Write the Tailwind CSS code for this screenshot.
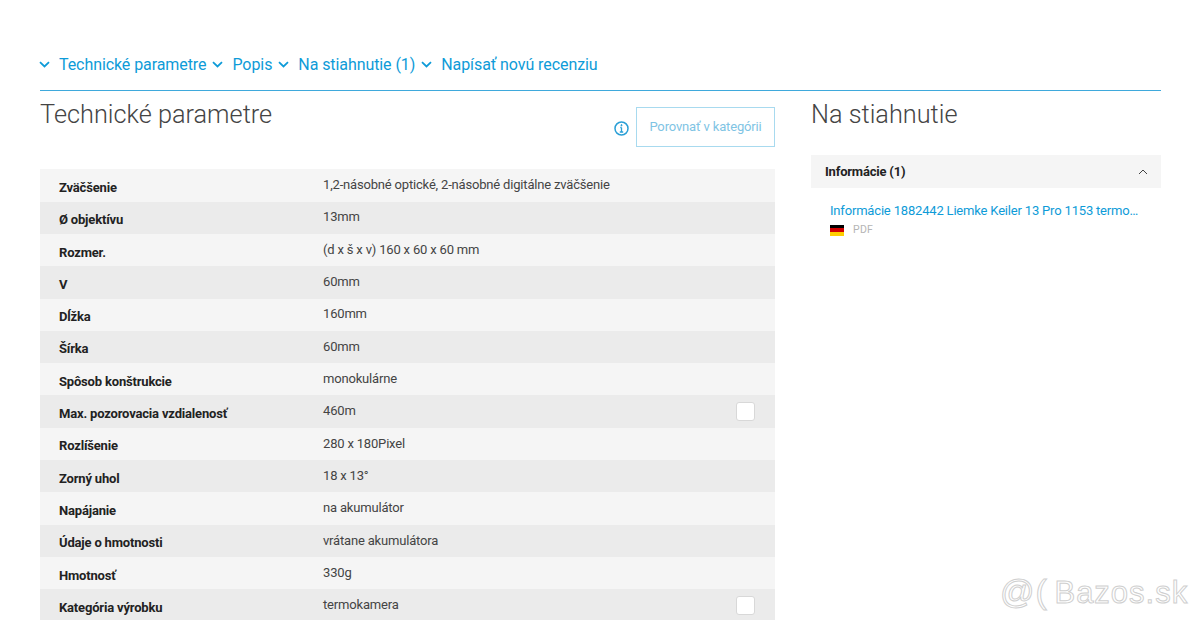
<!DOCTYPE html>
<html lang="sk">
<head>
<meta charset="utf-8">
<script src="https://cdn.jsdelivr.net/npm/@tailwindcss/browser@4"></script>
</head>
<body class="bg-white">
<div class="relative h-[620px] w-[1200px] overflow-hidden bg-white pl-10 pr-[39px] pt-[54px] font-['Roboto',sans-serif]">
  <nav class="flex h-[37px] items-start border-b border-[#3fa9dc] text-[16px] leading-[21px] tracking-[-0.08px] text-[#0e9bd8]">
    <svg class="mt-[7px] -ml-[1px] mr-[9px] h-[7px] w-[11px]" viewBox="0 0 11 7" fill="none" stroke="#0e9bd8" stroke-width="1.8"><path d="M1 1.2 5.5 5.4 10 1.2"/></svg>
    <a>Technické parametre</a>
    <svg class="mt-[7px] ml-[6px] mr-[9px] h-[7px] w-[11px]" viewBox="0 0 11 7" fill="none" stroke="#0e9bd8" stroke-width="1.8"><path d="M1 1.2 5.5 5.4 10 1.2"/></svg>
    <a>Popis</a>
    <svg class="mt-[7px] ml-[6px] mr-[9px] h-[7px] w-[11px]" viewBox="0 0 11 7" fill="none" stroke="#0e9bd8" stroke-width="1.8"><path d="M1 1.2 5.5 5.4 10 1.2"/></svg>
    <a>Na stiahnutie (1)</a>
    <svg class="mt-[7px] ml-[6px] mr-[9px] h-[7px] w-[11px]" viewBox="0 0 11 7" fill="none" stroke="#0e9bd8" stroke-width="1.8"><path d="M1 1.2 5.5 5.4 10 1.2"/></svg>
    <a>Napísať novú recenziu</a>
  </nav>
  <div class="flex gap-9">
    <section class="w-[735px]">
      <div class="flex h-[78.2px] items-start justify-between">
        <h2 class="mt-[8px] text-[25.3px] leading-[32px] font-light text-[#444]">Technické parametre</h2>
        <div class="mt-[16px] flex items-center gap-[7px]">
          <svg class="mt-[3px] h-[15px] w-[15px]" viewBox="0 0 15 15" fill="none" stroke="#2a9fd6"><circle cx="7.5" cy="7.5" r="6.5" stroke-width="1.5"/><path d="M7.5 6.5v4.2M5.8 11h3.4M6.3 6.5h1.2" stroke-width="1.3"/><circle cx="7.5" cy="4.2" r=".6" fill="#2a9fd6"/></svg>
          <div class="flex h-[40px] w-[139px] items-center justify-center border border-[#a8daef] text-[13px] tracking-[-0.15px] text-[#7fc4e4]">Porovnať v kategórii</div>
        </div>
      </div>
      <div class="text-[13px] tracking-[-0.18px] text-[#444]">
        <div class="flex h-[32.33px] items-center bg-[#f5f5f5]"><span class="mt-[4px] w-[283px] pl-[19px] font-bold leading-none text-[#222]">Zväčšenie</span><span class="-mt-[2px]">1,2-násobné optické, 2-násobné digitálne zväčšenie</span></div>
        <div class="flex h-[32.33px] items-center bg-[#ebebeb]"><span class="mt-[4px] w-[283px] pl-[19px] font-bold leading-none text-[#222]">Ø objektívu</span><span class="-mt-[1px]">13mm</span></div>
        <div class="flex h-[32.33px] items-center bg-[#f5f5f5]"><span class="mt-[4px] w-[283px] pl-[19px] font-bold leading-none text-[#222]">Rozmer.</span><span class="-mt-[1px]">(d x š x v) 160 x 60 x 60 mm</span></div>
        <div class="flex h-[32.33px] items-center bg-[#ebebeb]"><span class="mt-[4px] w-[283px] pl-[19px] font-bold leading-none text-[#222]">V</span><span class="-mt-[1px]">60mm</span></div>
        <div class="flex h-[32.33px] items-center bg-[#f5f5f5]"><span class="mt-[4px] w-[283px] pl-[19px] font-bold leading-none text-[#222]">Dĺžka</span><span class="-mt-[1px]">160mm</span></div>
        <div class="flex h-[32.33px] items-center bg-[#ebebeb]"><span class="mt-[4px] w-[283px] pl-[19px] font-bold leading-none text-[#222]">Šírka</span><span class="-mt-[1px]">60mm</span></div>
        <div class="flex h-[32.33px] items-center bg-[#f5f5f5]"><span class="mt-[4px] w-[283px] pl-[19px] font-bold leading-none text-[#222]">Spôsob konštrukcie</span><span class="-mt-[1px]">monokulárne</span></div>
        <div class="flex h-[32.33px] items-center bg-[#ebebeb]"><span class="mt-[4px] w-[283px] pl-[19px] font-bold leading-none text-[#222]">Max. pozorovacia vzdialenosť</span><span class="-mt-[1px]">460m</span><span class="mr-5 ml-auto h-[19px] w-[19px] rounded-[3px] border border-[#d8d8d8] bg-white"></span></div>
        <div class="flex h-[32.33px] items-center bg-[#f5f5f5]"><span class="mt-[4px] w-[283px] pl-[19px] font-bold leading-none text-[#222]">Rozlíšenie</span><span class="-mt-[1px]">280 x 180Pixel</span></div>
        <div class="flex h-[32.33px] items-center bg-[#ebebeb]"><span class="mt-[4px] w-[283px] pl-[19px] font-bold leading-none text-[#222]">Zorný uhol</span><span class="-mt-[1px]">18 x 13°</span></div>
        <div class="flex h-[32.33px] items-center bg-[#f5f5f5]"><span class="mt-[4px] w-[283px] pl-[19px] font-bold leading-none text-[#222]">Napájanie</span><span class="-mt-[1px]">na akumulátor</span></div>
        <div class="flex h-[32.33px] items-center bg-[#ebebeb]"><span class="mt-[4px] w-[283px] pl-[19px] font-bold leading-none text-[#222]">Údaje o hmotnosti</span><span class="-mt-[1px]">vrátane akumulátora</span></div>
        <div class="flex h-[32.33px] items-center bg-[#f5f5f5]"><span class="mt-[4px] w-[283px] pl-[19px] font-bold leading-none text-[#222]">Hmotnosť</span><span class="-mt-[1px]">330g</span></div>
        <div class="flex h-[32.33px] items-center bg-[#ebebeb]"><span class="mt-[4px] w-[283px] pl-[19px] font-bold leading-none text-[#222]">Kategória výrobku</span><span class="-mt-[1px]">termokamera</span><span class="mr-5 ml-auto h-[19px] w-[19px] rounded-[3px] border border-[#d8d8d8] bg-white"></span></div>
      </div>
    </section>
    <aside class="w-[350px]">
      <h2 class="mt-[8px] text-[25.3px] leading-[32px] font-light text-[#444]">Na stiahnutie</h2>
      <div class="mt-[24px] flex h-[33px] items-center justify-between bg-[#f5f5f5] pr-[13px] pl-[14px]">
        <span class="mt-[1px] text-[13px] font-bold tracking-[-0.2px] text-[#222]">Informácie (1)</span>
        <svg class="h-[6px] w-[10px]" viewBox="0 0 10 6" fill="none" stroke="#444"><path d="M1 5 5 1 9 5"/></svg>
      </div>
      <div class="pt-[13px] pl-[19px]">
        <a class="block w-[311px] truncate text-[13px] leading-[20px] tracking-[-0.18px] text-[#0e9bd8]">Informácie 1882442 Liemke Keiler 13 Pro 1153 termokamera</a>
        <div class="mt-[2px] flex items-center gap-[9px]">
          <span class="flex h-[11px] w-[14px] flex-col"><span class="flex-1 bg-black"></span><span class="flex-1 bg-[#d00000]"></span><span class="flex-1 bg-[#ffce00]"></span></span>
          <span class="text-[10.5px] leading-[14px] tracking-[0.3px] text-[#b5b5b5]">PDF</span>
        </div>
      </div>
    </aside>
  </div>
  <div class="absolute top-[571px] left-[1000px] whitespace-nowrap font-['Liberation_Sans',sans-serif] text-[31px] leading-[40px] tracking-[1px] text-white/60 [word-spacing:-3px] [-webkit-text-stroke:1px_#cfcfcf]"><span class="text-[34px]">@(</span> Bazos.sk</div>
</div>
</body>
</html>
